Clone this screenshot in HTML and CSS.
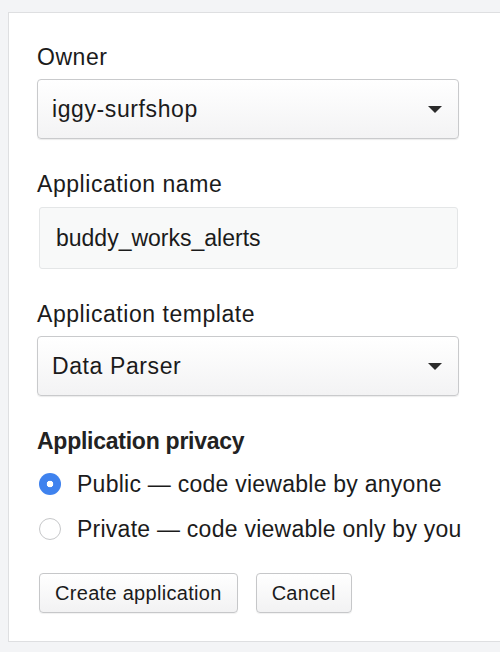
FILE: index.html
```html
<!DOCTYPE html>
<html>
<head>
<meta charset="utf-8">
<link rel="stylesheet" href="styles.css">
</head>
<body>
<form class="card">
  <div class="field">
    <label class="label">Owner</label>
    <div class="select">
      <span class="select-value">iggy-surfshop</span>
      <span class="caret"></span>
    </div>
  </div>
  <div class="field">
    <label class="label">Application name</label>
    <div class="input">buddy_works_alerts</div>
  </div>
  <div class="field">
    <label class="label">Application template</label>
    <div class="select">
      <span class="select-value">Data Parser</span>
      <span class="caret"></span>
    </div>
  </div>
  <div class="field privacy">
    <div class="label strong">Application privacy</div>
    <div class="radio-row">
      <span class="radio checked"></span>
      <span class="radio-text">Public — code viewable by anyone</span>
    </div>
    <div class="radio-row">
      <span class="radio"></span>
      <span class="radio-text">Private — code viewable only by you</span>
    </div>
  </div>
  <div class="actions">
    <button type="button" class="btn">Create application</button>
    <button type="button" class="btn">Cancel</button>
  </div>
</form>
</body>
</html>
```

FILE: styles.css
```css
html, body {
  margin: 0;
  padding: 0;
  height: 100%;
  overflow: hidden;
}
body {
  background: #f3f4f6;
  font-family: "Liberation Sans", Arial, sans-serif;
  color: #1b1b1b;
  padding-top: 12px;
  padding-left: 8px;
  box-sizing: border-box;
}
.card {
  width: 492px;
  height: 630px;
  box-sizing: border-box;
  background: #ffffff;
  border: 1px solid #dedfe1;
  border-right: none;
  padding: 32px 0 0 28px;
  margin: 0;
  letter-spacing: 0.25px;
}
.field {
  width: 422px;
  margin-bottom: 33px;
}
.label {
  display: block;
  font-size: 23px;
  line-height: 24px;
  margin-bottom: 10px;
  letter-spacing: 0.55px;
}
.strong {
  font-weight: bold;
  margin-bottom: 19px;
  letter-spacing: -0.25px;
  color: #222;
}
.select {
  height: 60px;
  box-sizing: border-box;
  border: 1px solid #c9cacc;
  border-radius: 4px;
  background: linear-gradient(#ffffff, #f3f3f4);
  box-shadow: 0 1px 1px rgba(0, 0, 0, 0.08);
  display: flex;
  align-items: center;
  justify-content: space-between;
  padding: 0 16px 0 14px;
  font-size: 23px;
  letter-spacing: 0.6px;
}
.caret {
  width: 0;
  height: 0;
  border-left: 7px solid transparent;
  border-right: 7px solid transparent;
  border-top: 7px solid #2b2b2b;
  margin-top: 1px;
}
.input {
  height: 62px;
  margin-left: 2px;
  width: 419px;
  box-sizing: border-box;
  border: 1px solid #e4e6e7;
  border-radius: 3px;
  background: #f8f9f9;
  display: flex;
  align-items: center;
  padding-left: 16px;
  font-size: 23px;
  letter-spacing: 0;
  margin-top: 11px;
}
.field:nth-child(2) .label {
  margin-bottom: 0;
}
.privacy {
  width: auto;
  margin-bottom: 0;
}
.radio-row {
  display: flex;
  align-items: center;
  height: 24px;
  margin-bottom: 21px;
  font-size: 23px;
  white-space: nowrap;
}
.radio {
  width: 22px;
  height: 22px;
  box-sizing: border-box;
  border-radius: 50%;
  border: 1px solid #c6c7c9;
  background: #fff;
  margin: 0 16px 0 2px;
  flex: none;
}
.radio.checked {
  border: none;
  background: radial-gradient(circle, #ffffff 0 3px, #3f82ee 3.6px);
}
.actions {
  display: flex;
  gap: 18px;
  padding-left: 2px;
  margin-top: 32px;
}
.btn {
  height: 40px;
  box-sizing: border-box;
  border: 1px solid #c6c7c9;
  border-radius: 4px;
  background: linear-gradient(#ffffff, #f2f2f3);
  box-shadow: 0 1px 1px rgba(0, 0, 0, 0.06);
  font-family: inherit;
  font-size: 20px;
  letter-spacing: 0.3px;
  color: #1b1b1b;
  padding: 0 15px;
}
```
